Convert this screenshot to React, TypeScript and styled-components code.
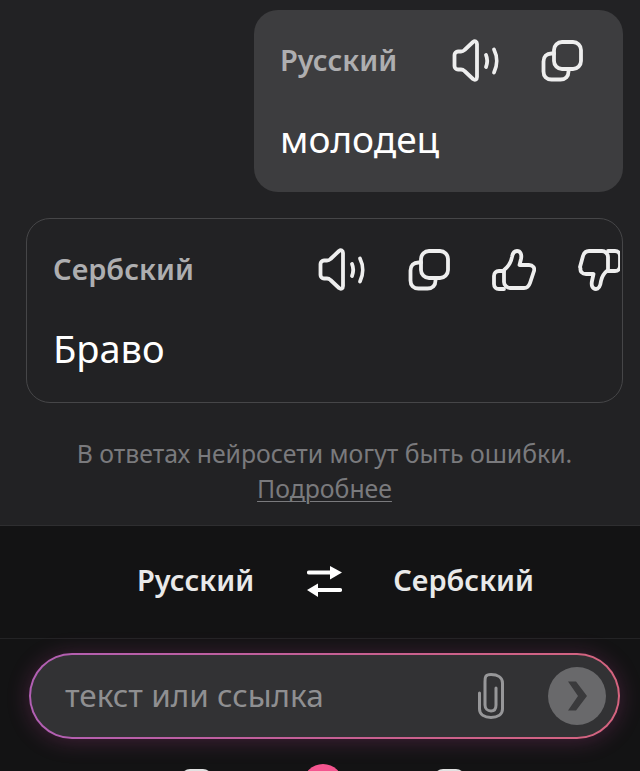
import React from "react";
import styled, { createGlobalStyle } from "styled-components";

const Global = createGlobalStyle`
  html, body { margin: 0; padding: 0; background: #131314; }
  body { font-family: "Noto Sans", "Open Sans", sans-serif; }
`;

const Page = styled.div`
  width: 640px;
  height: 771px;
  overflow: hidden;
  display: flex;
  flex-direction: column;
  background: #131314;
`;

const Chat = styled.main`
  height: 526px;
  flex: none;
  box-sizing: border-box;
  background: #222224;
  padding: 10px 17px 0 26px;
  display: flex;
  flex-direction: column;
  border-bottom: 1px solid #2e2e30;
`;

const Bubble = styled.section<{ $mine?: boolean }>`
  box-sizing: border-box;
  flex: none;
  border-radius: 24px;
  align-self: ${(p) => (p.$mine ? "flex-end" : "stretch")};
  width: ${(p) => (p.$mine ? "369px" : "auto")};
  height: ${(p) => (p.$mine ? "182px" : "185px")};
  margin-top: ${(p) => (p.$mine ? "0" : "26px")};
  padding: 25px 0 0 26px;
  background: ${(p) => (p.$mine ? "#3d3d3f" : "transparent")};
  border: ${(p) => (p.$mine ? "none" : "1px solid #464648")};
  overflow: hidden;
`;

const Head = styled.div`
  display: flex;
  align-items: center;
  height: 50px;
`;

const Lang = styled.span`
  font-size: 29px;
  font-weight: 600;
  color: #aeaeb0;
  line-height: 50px;
  flex: none;
`;

const Tools = styled.div<{ $left: number; $gap: number }>`
  display: flex;
  align-items: center;
  margin: 2px 0 0 ${(p) => p.$left}px;
  gap: ${(p) => p.$gap}px;
  flex: none;
`;

const Body = styled.p<{ $wide?: boolean }>`
  margin: 29px 0 0;
  font-size: ${(p) => (p.$wide ? "38px" : "37px")};
  line-height: 50px;
  color: #fff;
`;

const Icon = styled.svg`
  display: block;
  flex: none;
  fill: none;
  stroke: #eeeeee;
  stroke-width: 3.8;
  stroke-linecap: round;
  stroke-linejoin: round;
`;

const Note = styled.footer`
  margin-top: 33px;
  text-align: center;
  font-size: 24.8px;
  line-height: 35px;
  color: #7a7a7d;
`;

const More = styled.span`
  display: inline-block;
  text-decoration: underline;
  text-underline-offset: 3px;
  text-decoration-thickness: 1px;
`;

const LangBar = styled.nav`
  height: 113px;
  flex: none;
  box-sizing: border-box;
  display: flex;
  align-items: center;
  padding: 0 0 5px 137px;
  background: #131314;
  border-bottom: 1px solid #232325;
  font-size: 29px;
  font-weight: 600;
  color: #e9e9e9;
`;

const Swap = styled.svg`
  display: block;
  margin: 3px 51px 0 53px;
  flex: none;
`;

const InputZone = styled.div`
  flex: 1;
  padding: 14px 20px 0 29px;
  background: #131314;
`;

const Field = styled.div`
  height: 86px;
  box-sizing: border-box;
  border-radius: 43px;
  padding: 2px;
  background: linear-gradient(90deg, #b25fb4 0%, #c9608f 60%, #d5647f 100%);
  box-shadow: 0 2px 22px rgba(190, 70, 150, 0.28);
`;

const FieldInner = styled.div`
  height: 100%;
  border-radius: 41px;
  background: #323234;
  display: flex;
  align-items: center;
  padding: 0 12px 0 34px;
`;

const Placeholder = styled.span`
  flex: 1;
  font-size: 31.5px;
  color: #8f8f91;
  padding-bottom: 4px;
`;

const Send = styled.div`
  width: 58px;
  height: 58px;
  margin-left: 44px;
  border-radius: 50%;
  background: #69696b;
  display: flex;
  align-items: center;
  justify-content: center;
`;

const Dock = styled.div`
  display: flex;
  justify-content: center;
  align-items: flex-start;
  gap: 91px;
  margin-top: 25px;
  padding-right: 4px;
`;

const DockKey = styled.span<{ $round?: boolean }>`
  display: block;
  flex: none;
  width: ${(p) => (p.$round ? "40px" : "31px")};
  height: ${(p) => (p.$round ? "40px" : "30px")};
  border-radius: ${(p) => (p.$round ? "50%" : "9px")};
  background: ${(p) => (p.$round ? "#f4558f" : "#e2e2e2")};
  margin-top: ${(p) => (p.$round ? "0" : "5px")};
`;

const Speaker = () => (
  <Icon width="48" height="44" viewBox="0 0 48 44">
    <path d="M2.500 16c0-2 1.500-3.500 3.500-3.500h3c1.500 0 2.500-.5 3.500-1.500L21 3c2-1.500 4-.5 4 2v33c0 2.500-2 3.500-4 2l-8.500-8c-1-1-2-1.500-3.500-1.500H6c-2 0-3.500-1.500-3.500-3.500z" />
    <path d="M34 16c1.500 3.500 1.500 8 0 12" />
    <path d="M42 10.500c3.500 7 3.500 16 0 23" />
  </Icon>
);

const Copy = () => (
  <Icon width="42" height="44" viewBox="0 0 42 44">
    <rect x="13" y="3" width="27" height="27" rx="8" />
    <path d="M13 14.500h-2.500c-5 0-8 3-8 8v10c0 5 3 8 8 8h9c5 0 8-3 8-8V30" />
  </Icon>
);

const Like = () => (
  <Icon width="44" height="44" viewBox="0 0 44 44">
    <path d="M12 22c4-3 7-8 8-13 .5-3 2-6 5-6 3.500 0 5 3.500 4 8l-1.500 6H37c4 0 6 3 5 6l-4 12c-1 3-3 5-6 5H18c-3 0-6-3-6-6z" />
    <path d="M12 23H7c-3 0-5 2-5 5v8c0 3 2 5 5 5h5" />
  </Icon>
);

const Dislike = () => (
  <Icon width="42" height="44" viewBox="0 0 42 44">
    <path d="M30 22c-4 3-6 6-7 11-.5 4-2 8-5 8-3.500 0-5-3.500-4-8l1.500-7H8c-4 0-6-3-5.500-5.500L2 19l3-11c1-3 3-5 6-5h13c3 0 6 3 6 6z" />
    <path d="M30 3h7c3 0 5 2 5 5v10c0 3-2 5-5 5h-7" />
  </Icon>
);

export default function App() {
  return (
    <Page>
      <Global />
      <Chat>
        <Bubble $mine>
          <Head>
            <Lang>Русский</Lang>
            <Tools $left={55} $gap={41}>
              <Speaker />
              <Copy />
            </Tools>
          </Head>
          <Body>молодец</Body>
        </Bubble>
        <Bubble>
          <Head>
            <Lang>Сербский</Lang>
            <Tools $left={124} $gap={42}>
              <Speaker />
              <Copy />
              <Like />
              <Dislike />
            </Tools>
          </Head>
          <Body $wide>Браво</Body>
        </Bubble>
        <Note>
          В ответах нейросети могут быть ошибки.
          <br />
          <More>Подробнее</More>
        </Note>
      </Chat>
      <LangBar>
        <span>Русский</span>
        <Swap width="35" height="31" viewBox="0 0 35 31">
          <path d="M2 6.500h24" stroke="#fff" strokeWidth="4.200" strokeLinecap="round" />
          <path d="M23 0l12 6.500-12 7z" fill="#fff" />
          <path d="M33 24H9" stroke="#fff" strokeWidth="4.200" strokeLinecap="round" />
          <path d="M11 17.500L0 24l11 7z" fill="#fff" />
        </Swap>
        <span>Сербский</span>
      </LangBar>
      <InputZone>
        <Field>
          <FieldInner>
            <Placeholder>текст или ссылка</Placeholder>
            <svg width="26" height="46" viewBox="0 0 26 46" fill="none" stroke="#979799" strokeWidth="3" strokeLinecap="round">
              <path d="M1.500 20v16c0 5.500 5 8.500 11.500 8.500s11.500-3 11.500-8.500V10c0-5.500-5-8.500-11.500-8.500S7 4.500 7 10v22c0 3.500 2.500 6 6 6s5-2.500 5-6V15" />
            </svg>
            <Send>
              <svg width="20" height="30" viewBox="0 0 20 30">
                <path d="M1 .5h8L20 15 9 29.500H1L11 15z" fill="#3a3a3c" />
              </svg>
            </Send>
          </FieldInner>
        </Field>
        <Dock>
          <DockKey />
          <DockKey $round />
          <DockKey />
        </Dock>
      </InputZone>
    </Page>
  );
}
